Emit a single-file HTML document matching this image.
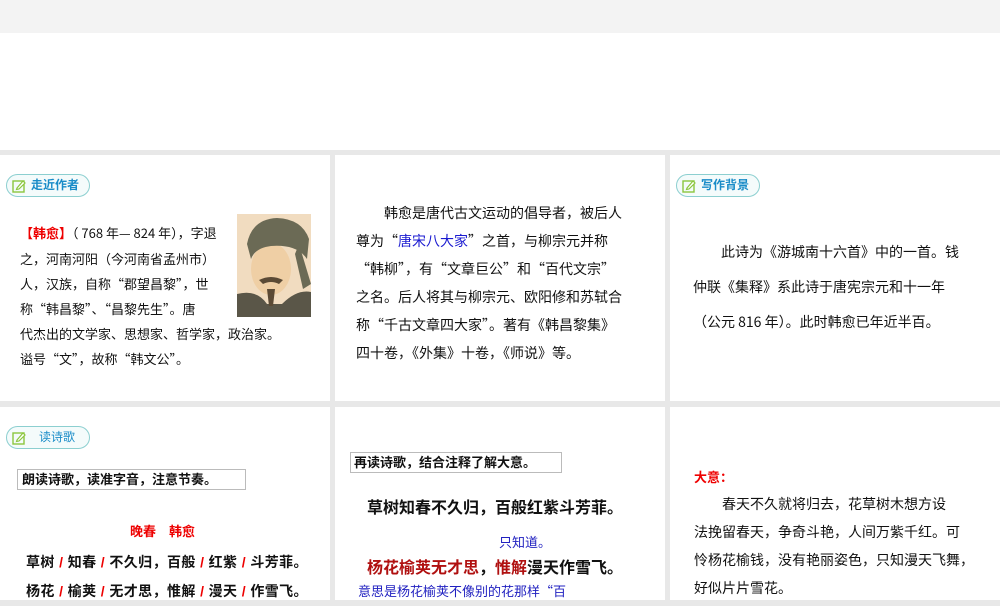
<!DOCTYPE html>
<html><head><meta charset="utf-8"><style>
body{margin:0;width:1000px;height:600px;overflow:hidden;background:#e8e8e8;font-family:"Noto Sans CJK SC","Liberation Sans",sans-serif;color:#111;position:relative}
.a{position:absolute}
.p{position:absolute;background:#fff}
.tag{position:absolute;height:23px;border:1.5px solid #8ccfd0;border-radius:12px;background:#f4fbfb;font-family:"Liberation Sans","Noto Sans CJK SC",sans-serif;font-weight:bold;color:#1a8cc8;font-size:12px;line-height:21px;padding-left:24px;box-sizing:border-box}
.tag svg{position:absolute;left:5px;top:4px}
.s{font-family:"Liberation Sans","Noto Sans CJK SC",sans-serif}
.r{color:#e00}
.t{font-size:14px;line-height:28px;white-space:nowrap}
</style></head><body>
<div class="a" style="left:0;top:0;width:1000px;height:33px;background:#f3f3f3"></div>
<div class="a" style="left:0;top:33px;width:1000px;height:117px;background:#fff"></div>

<div class="p" style="left:0;top:155px;width:330px;height:246px"></div>
<div class="p" style="left:335px;top:155px;width:330px;height:246px"></div>
<div class="p" style="left:670px;top:155px;width:330px;height:246px"></div>
<div class="p" style="left:0;top:407px;width:330px;height:193px"></div>
<div class="p" style="left:335px;top:407px;width:330px;height:193px"></div>
<div class="p" style="left:670px;top:407px;width:330px;height:193px"></div>

<div class="tag" style="left:6px;top:174px;width:84px">
<svg width="14" height="14" viewBox="0 0 14 14"><rect x="1" y="2" width="11" height="11" fill="none" stroke="#8cc63f" stroke-width="1.4"/><path d="M5 9 L11 2 L13 4 L7 10 L4.5 10.5 Z" fill="#fff" stroke="#8cc63f" stroke-width="1.2"/></svg>走近作者</div>
<div class="tag" style="left:676px;top:174px;width:84px">
<svg width="14" height="14" viewBox="0 0 14 14"><rect x="1" y="2" width="11" height="11" fill="none" stroke="#8cc63f" stroke-width="1.4"/><path d="M5 9 L11 2 L13 4 L7 10 L4.5 10.5 Z" fill="#fff" stroke="#8cc63f" stroke-width="1.2"/></svg>写作背景</div>
<div class="tag" style="left:6px;top:426px;width:84px;padding-left:32px;font-weight:normal">
<svg width="14" height="14" viewBox="0 0 14 14"><rect x="1" y="2" width="11" height="11" fill="none" stroke="#8cc63f" stroke-width="1.4"/><path d="M5 9 L11 2 L13 4 L7 10 L4.5 10.5 Z" fill="#fff" stroke="#8cc63f" stroke-width="1.2"/></svg>读诗歌</div>

<svg class="a" style="left:237px;top:214px" width="74" height="103" viewBox="0 0 74 103">
<rect width="74" height="103" fill="#f1dcc0"/>
<path d="M0 103 L0 80 Q20 75 30 90 L45 90 Q60 75 74 78 L74 103Z" fill="#5a5648"/>
<ellipse cx="34" cy="55" rx="20" ry="26" fill="#efcfa5"/>
<path d="M10 30 Q15 5 40 4 Q65 5 72 25 L70 45 Q60 30 34 32 Q18 34 14 45Z" fill="#6b6a55"/>
<path d="M62 30 L74 70 L66 75 L58 40Z" fill="#6b6a55"/>
<path d="M22 66 Q34 60 46 66 L42 70 Q34 66 26 70Z" fill="#5b4a35"/>
<path d="M30 75 L38 75 L36 92 L32 92Z" fill="#5b4a35"/>
</svg>

<div class="a" style="left:20px;top:220px;font-size:13px;line-height:25px;white-space:nowrap">
<span class="r s" style="font-weight:bold">【韩愈】</span>（ 768 年— 824 年），字退<br>之，河南河阳（今河南省孟州市）<br>人，汉族，自称“郡望昌黎”，世<br>称“韩昌黎”、“昌黎先生”。唐<br>代杰出的文学家、思想家、哲学家，政治家。<br>谥号“文”，故称“韩文公”。</div>

<div class="a t" style="left:356px;top:199px">　　韩愈是唐代古文运动的倡导者，被后人<br>尊为“<span style="color:#1a1ad0">唐宋八大家</span>”之首，与柳宗元并称<br>“韩柳”，有“文章巨公”和“百代文宗”<br>之名。后人将其与柳宗元、欧阳修和苏轼合<br>称“千古文章四大家”。著有《韩昌黎集》<br>四十卷，《外集》十卷，《师说》等。</div>

<div class="a" style="left:693px;top:235px;font-size:14px;line-height:35px;white-space:nowrap">　　此诗为《游城南十六首》中的一首。钱<br>仲联《集释》系此诗于唐宪宗元和十一年<br>（公元 816 年）。此时韩愈已年近半百。</div>

<div class="a s" style="left:17px;top:469px;width:229px;height:21px;border:1px solid #bbb;box-sizing:border-box;font-size:13px;font-weight:bold;line-height:19px;padding-left:4px">朗读诗歌，读准字音，注意节奏。</div>
<div class="a s r" style="left:130px;top:521px;font-size:13px;font-weight:bold">晚春　韩愈</div>
<div class="a s" style="left:26px;top:548px;font-size:14px;font-weight:bold;line-height:29px;white-space:nowrap;letter-spacing:0.4px">草树<span class="r"> / </span>知春<span class="r"> / </span>不久归，百般<span class="r"> / </span>红紫<span class="r"> / </span>斗芳菲。<br>杨花<span class="r"> / </span>榆荚<span class="r"> / </span>无才思，惟解<span class="r"> / </span>漫天<span class="r"> / </span>作雪飞。</div>

<div class="a s" style="left:350px;top:452px;width:212px;height:21px;border:1px solid #bbb;box-sizing:border-box;font-size:13px;font-weight:bold;line-height:19px;padding-left:3px">再读诗歌，结合注释了解大意。</div>
<div class="a s" style="left:367px;top:494px;font-size:16px;font-weight:bold;white-space:nowrap">草树知春不久归，百般红紫斗芳菲。</div>
<div class="a" style="left:499px;top:532px;font-size:13px;color:#2020c0">只知道。</div>
<div class="a s" style="left:367px;top:554px;font-size:16px;font-weight:bold;white-space:nowrap"><span style="color:#b01010">杨花榆荚无才思</span>，<span style="color:#b01010">惟解</span>漫天作雪飞。</div>
<div class="a" style="left:358px;top:581px;font-size:13px;color:#2020c0;white-space:nowrap">意思是杨花榆荚不像别的花那样“百</div>

<div class="a s r" style="left:694px;top:467px;font-size:13px;font-weight:bold">大意：</div>
<div class="a" style="left:694px;top:490px;font-size:14px;line-height:28px;white-space:nowrap">　　春天不久就将归去，花草树木想方设<br>法挽留春天，争奇斗艳，人间万紫千红。可<br>怜杨花榆钱，没有艳丽姿色，只知漫天飞舞，<br>好似片片雪花。</div>
</body></html>
